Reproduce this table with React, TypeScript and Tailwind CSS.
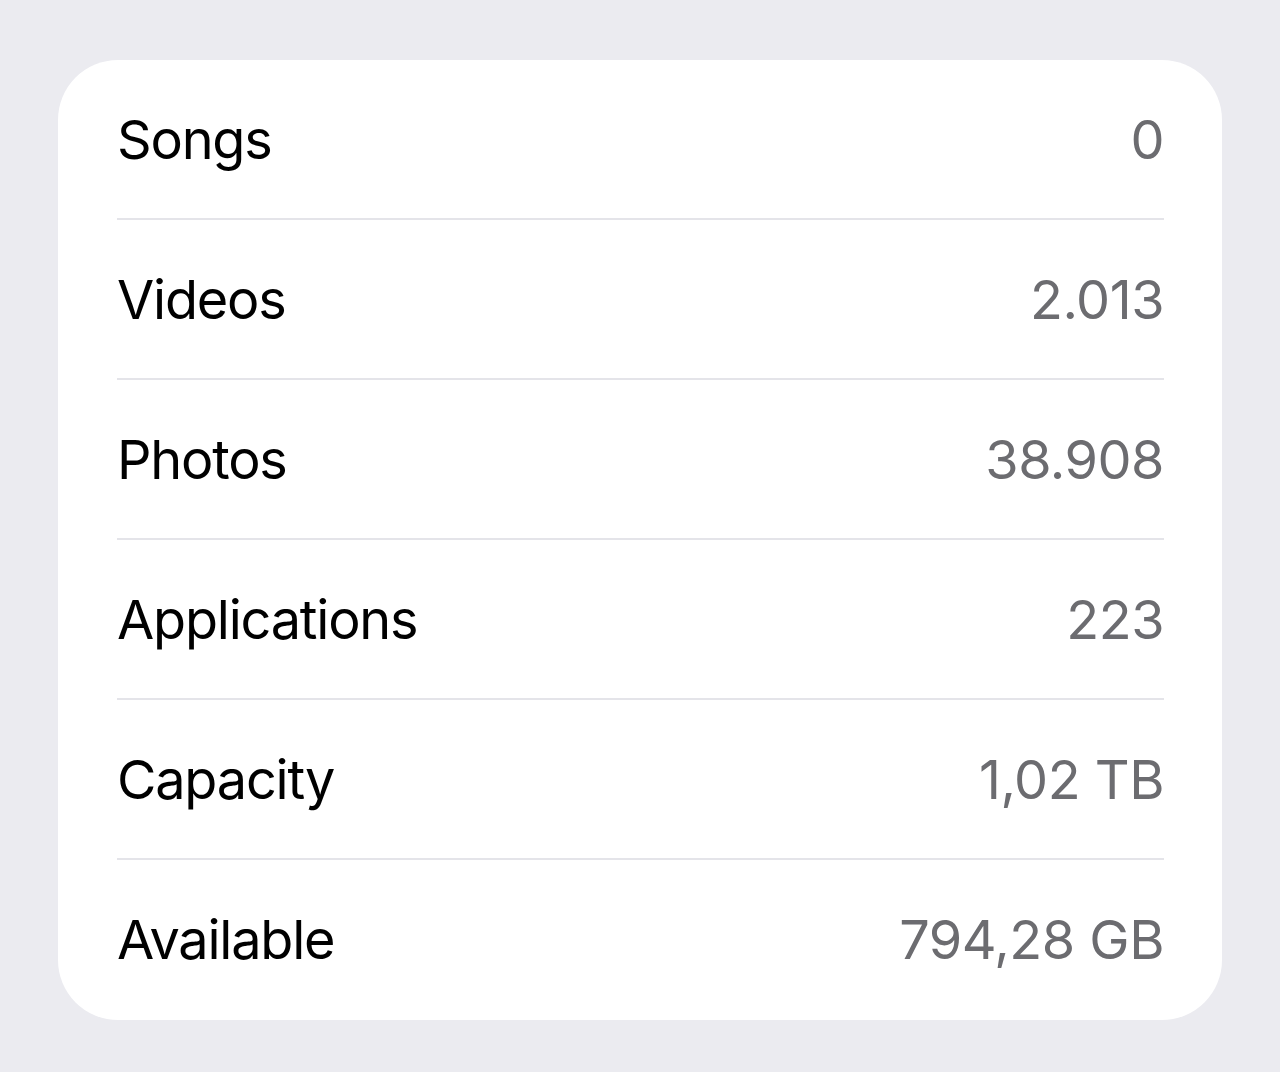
const rows = [
  { label: "Songs", value: "0" },
  { label: "Videos", value: "2.013" },
  { label: "Photos", value: "38.908" },
  { label: "Applications", value: "223" },
  { label: "Capacity", value: "1,02 TB" },
  { label: "Available", value: "794,28 GB" },
];

export default function App() {
  return (
    <div className="min-h-[1072px] w-[1280px] bg-[#ebebf0] pt-[60px] font-['Inter','Noto_Sans',sans-serif]">
      <div className="mx-[58px] rounded-[60px] bg-white pb-[2px] pl-[59px] pr-[58px]">
        {rows.map((row, i) => (
          <div
            key={row.label}
            className={
              i < rows.length - 1
                ? "flex h-[158px] items-center justify-between border-b-[2px] border-[#e4e4e9] box-content"
                : "flex h-[158px] items-center justify-between"
            }
          >
            <span className="text-[54px] tracking-[-1.2px] text-black">{row.label}</span>
            <span className="text-[54px] tracking-[-0.5px] text-[#6c6c70]">{row.value}</span>
          </div>
        ))}
      </div>
    </div>
  );
}
